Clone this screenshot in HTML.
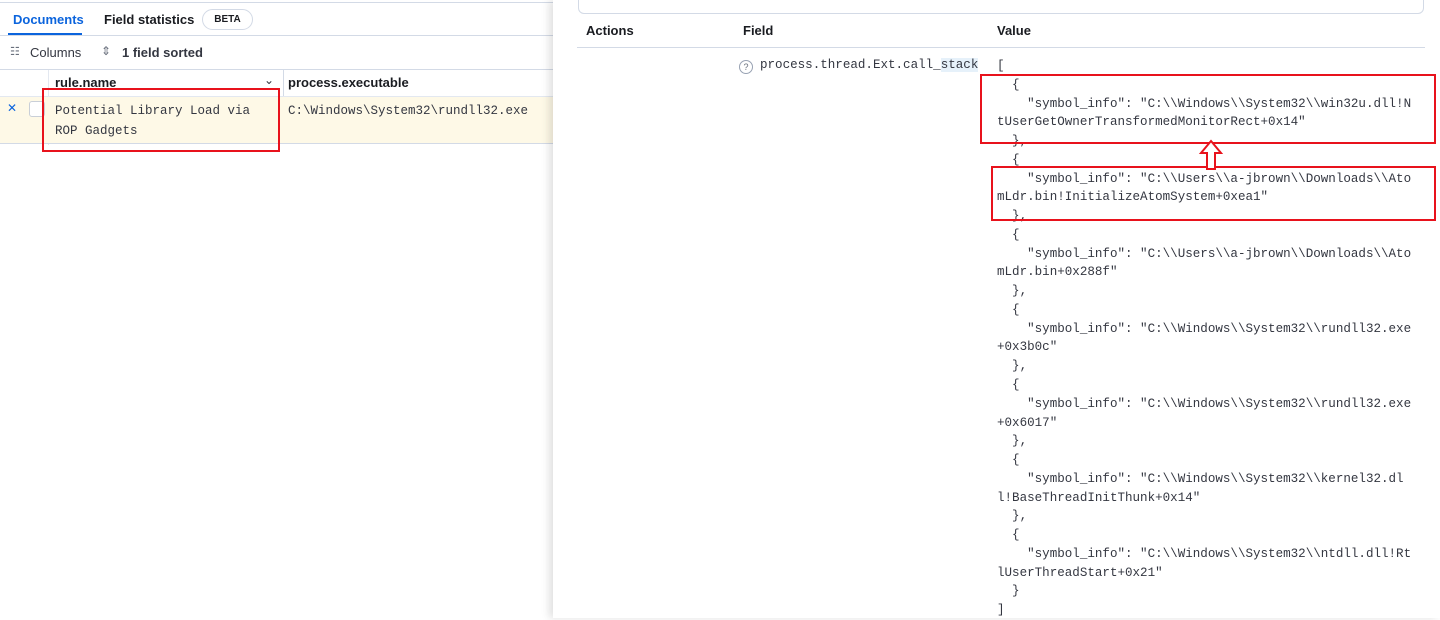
<!DOCTYPE html>
<html><head><meta charset="utf-8"><style>
*{margin:0;padding:0;box-sizing:border-box}
body{width:1440px;height:618px;overflow:hidden;position:relative;background:#fff;font-family:"Liberation Sans",sans-serif;color:#343741}
.left{position:absolute;left:0;top:0;width:553px;height:618px;background:#fff}
.abs{position:absolute}
.mono{font-family:"Liberation Mono",monospace}
.right{position:absolute;left:553px;top:0;width:887px;height:618px;background:#fff;box-shadow:-4px 0 8px rgba(0,0,0,.12)}
pre{font-family:"Liberation Mono",monospace;font-size:12.55px;line-height:18.76px;color:#343741}
.red{position:absolute;border:2px solid #e8121c}
</style></head><body>
<div class="left">
 <div class="abs" style="left:0;top:2px;width:553px;height:1px;background:#d3dae6"></div>
 <div class="abs" style="left:13px;top:12px;font-size:13px;font-weight:bold;color:#0b64dd">Documents</div>
 <div class="abs" style="left:8px;top:33px;width:74px;height:2px;background:#0b64dd"></div>
 <div class="abs" style="left:104px;top:12px;font-size:13px;font-weight:bold;color:#1a1c21">Field statistics</div>
 <div class="abs" style="left:202px;top:9px;width:51px;height:21px;border:1px solid #d3dae6;border-radius:11px;font-size:10px;font-weight:bold;text-align:center;line-height:19px;color:#1a1c21">BETA</div>
 <div class="abs" style="left:0;top:35px;width:553px;height:1px;background:#d3dae6"></div>
 <div class="abs" style="left:10px;top:45px;font-size:11px;color:#69707d">☷</div>
 <div class="abs" style="left:30px;top:45px;font-size:13px;color:#343741">Columns</div>
 <div class="abs" style="left:101px;top:44px;font-size:12px;color:#69707d">⇕</div>
 <div class="abs" style="left:122px;top:45px;font-size:13px;font-weight:bold;color:#343741">1 field sorted</div>
 <div class="abs" style="left:0;top:69px;width:553px;height:1px;background:#d3dae6"></div>
 <div class="abs" style="left:48px;top:70px;width:1px;height:75px;background:#e3e8f0"></div>
 <div class="abs" style="left:283px;top:70px;width:1px;height:27px;background:#d3dae6"></div>
 <div class="abs" style="left:55px;top:75px;font-size:13px;font-weight:bold;color:#1a1c21">rule.name</div>
 <div class="abs" style="left:264px;top:73px;font-size:12px;color:#343741">⌄</div>
 <div class="abs" style="left:288px;top:75px;font-size:13px;font-weight:bold;color:#1a1c21">process.executable</div>
 <div class="abs" style="left:0;top:96px;width:553px;height:48px;background:#fef9e7;border-top:1px solid #e3e8f0;border-bottom:1px solid #d3dae6"></div>
 <div class="abs" style="left:7px;top:101px;font-size:12px;color:#0b64dd">✕</div>
 <div class="abs" style="left:29px;top:101px;width:16px;height:16px;border:1px solid #c9cfd8;border-radius:3px;background:#fff"></div>
 <div class="abs mono" style="left:55px;top:101px;font-size:12.5px;line-height:20px;color:#343741">Potential Library Load via<br>ROP Gadgets</div>
 <div class="abs mono" style="left:288px;top:101px;font-size:12.5px;line-height:20px;color:#343741">C:\Windows\System32\rundll32.exe</div>
 <div class="red" style="left:42px;top:88px;width:238px;height:64px"></div>
</div>
<div class="right">
 <div class="abs" style="left:25px;top:-10px;width:846px;height:24px;border:1px solid #d3dae6;border-radius:6px"></div>
 <div class="abs" style="left:33px;top:23px;font-size:13px;font-weight:bold;color:#1a1c21">Actions</div>
 <div class="abs" style="left:190px;top:23px;font-size:13px;font-weight:bold;color:#1a1c21">Field</div>
 <div class="abs" style="left:444px;top:23px;font-size:13px;font-weight:bold;color:#1a1c21">Value</div>
 <div class="abs" style="left:24px;top:47px;width:848px;height:1px;background:#d3dae6"></div>
 <div class="abs" style="left:186px;top:60px;width:14px;height:14px;border:1px solid #98a2b3;border-radius:50%;font-size:9px;text-align:center;line-height:12px;color:#69707d">?</div>
 <div class="abs mono" style="left:207px;top:58px;font-size:12.55px;color:#343741">process.thread.Ext.call_<span style="background:#e6f1fa">stack</span></div>
 <pre class="abs" style="left:444px;top:57px">[
  {
    "symbol_info": "C:\\Windows\\System32\\win32u.dll!N
tUserGetOwnerTransformedMonitorRect+0x14"
  },
  {
    "symbol_info": "C:\\Users\\a-jbrown\\Downloads\\Ato
mLdr.bin!InitializeAtomSystem+0xea1"
  },
  {
    "symbol_info": "C:\\Users\\a-jbrown\\Downloads\\Ato
mLdr.bin+0x288f"
  },
  {
    "symbol_info": "C:\\Windows\\System32\\rundll32.exe
+0x3b0c"
  },
  {
    "symbol_info": "C:\\Windows\\System32\\rundll32.exe
+0x6017"
  },
  {
    "symbol_info": "C:\\Windows\\System32\\kernel32.dl
l!BaseThreadInitThunk+0x14"
  },
  {
    "symbol_info": "C:\\Windows\\System32\\ntdll.dll!Rt
lUserThreadStart+0x21"
  }
]</pre>
 <div class="red" style="left:427px;top:74px;width:456px;height:70px"></div>
 <div class="red" style="left:438px;top:166px;width:445px;height:55px"></div>
 <svg class="abs" style="left:645px;top:139px" width="26" height="32" viewBox="0 0 26 32"><path d="M13 2 L23 14 L17 14 L17 30 L9 30 L9 14 L3 14 Z" fill="#fff" stroke="#e8121c" stroke-width="2"/></svg>
</div>
</body></html>
